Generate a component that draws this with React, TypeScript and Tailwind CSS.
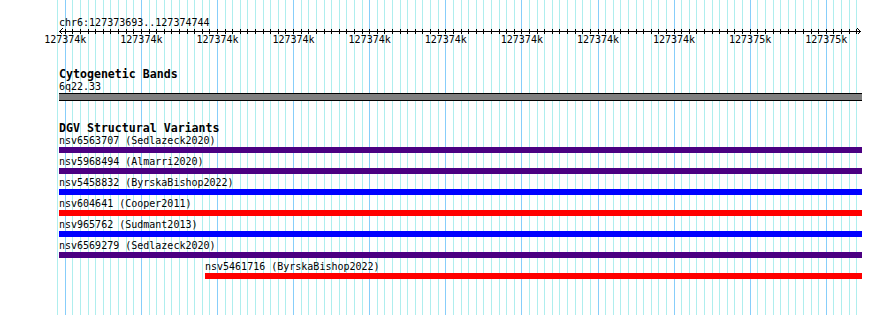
// Genome browser panel: ruler, cytogenetic band track and DGV variant tracks over a bp grid.
const MONO = "font-['DejaVu_Sans_Mono','Liberation_Mono',monospace]";

// grid: first major line at 65.3px, 10bp minor steps of 7.61px, major every 10 steps
const GRID = Array.from({ length: 106 }, (_, i) => i - 1).map((k) => ({
  x: Math.floor(65.3 + 7.61 * k),
  major: k % 10 === 0,
}));

const LABELS = [
  "127374k", "127374k", "127374k", "127374k", "127374k", "127374k",
  "127374k", "127374k", "127374k", "127375k", "127375k",
];

const VARIANTS = [
  { name: "nsv6563707 (Sedlazeck2020)", color: "bg-[#4b0082]", offset: "" },
  { name: "nsv5968494 (Almarri2020)", color: "bg-[#4b0082]", offset: "" },
  { name: "nsv5458832 (ByrskaBishop2022)", color: "bg-[#0000ff]", offset: "" },
  { name: "nsv604641 (Cooper2011)", color: "bg-[#ff0000]", offset: "" },
  { name: "nsv965762 (Sudmant2013)", color: "bg-[#0000ff]", offset: "" },
  { name: "nsv6569279 (Sedlazeck2020)", color: "bg-[#4b0082]", offset: "" },
  { name: "nsv5461716 (ByrskaBishop2022)", color: "bg-[#ff0000]", offset: "ml-[146px]" },
];

function Grid() {
  return (
    <svg
      className="pointer-events-none absolute inset-0"
      width={890}
      height={315}
      shapeRendering="crispEdges"
    >
      {GRID.map((g) => (
        <rect
          key={g.x}
          x={g.x}
          y={0}
          width={1}
          height={315}
          fill={g.major ? "#87cefa" : "#afeeee"}
        />
      ))}
    </svg>
  );
}

function Ruler() {
  return (
    <svg width={803} height={6} className="block overflow-visible" shapeRendering="crispEdges">
      <line x1={0} y1={3.5} x2={802} y2={3.5} stroke="black" />
      {GRID.filter((g) => g.x >= 65).map((g) => (
        <line key={g.x} x1={g.x - 58.5} y1={1} x2={g.x - 58.5} y2={6} stroke="black" />
      ))}
      <polyline points="3.5,0.5 0.5,3.5 3.5,6.5" fill="none" stroke="black" />
      <polyline points="798.5,0.5 801.5,3.5 798.5,6.5" fill="none" stroke="black" />
    </svg>
  );
}

export default function App() {
  return (
    <div className={`relative h-[315px] w-[890px] overflow-hidden bg-white text-black ${MONO}`}>
      <Grid />
      <div className="relative ml-[59px] w-[803px] pt-[17px]">
        <div className="text-[10px] leading-[11px]">chr6:127373693..127374744</div>
        <Ruler />
        <div className="-ml-[31.75px] flex text-[10px] leading-[11px]">
          {LABELS.map((l, i) => (
            <span key={i} className="w-[76.1px] shrink-0 text-center">
              {l}
            </span>
          ))}
        </div>

        <h3 className="mt-[22px] text-[11.6px] font-bold leading-[14px]">Cytogenetic Bands</h3>
        <div className="text-[10px] leading-[12px]">6q22.33</div>
        <div className="h-[8px] border-y border-black bg-[#808080]" />

        <h3 className="mt-[20px] text-[11.6px] font-bold leading-[14px]">DGV Structural Variants</h3>
        <ul>
          {VARIANTS.map((v) => (
            <li key={v.name} className={`pb-[3px] ${v.offset}`}>
              <div className="text-[10px] leading-[12px]">{v.name}</div>
              <div className={`h-[6px] ${v.color}`} />
            </li>
          ))}
        </ul>
      </div>
    </div>
  );
}
